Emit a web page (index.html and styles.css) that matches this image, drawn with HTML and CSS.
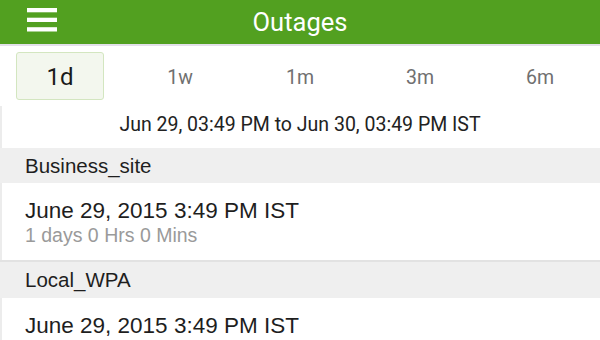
FILE: index.html
```html
<!DOCTYPE html>
<html lang="en">
<head>
    <meta charset="UTF-8">
    <title>Outages</title>
    <link rel="stylesheet" href="styles.css">
</head>
<body>
    <div class="header">
        <button class="menu-btn" aria-label="Menu">
            <svg width="30" height="24" viewBox="0 0 30 24">
                <rect x="0" y="0" width="30" height="4.3" fill="#fff"/>
                <rect x="0" y="9.7" width="30" height="4.3" fill="#fff"/>
                <rect x="0" y="19.2" width="30" height="4.3" fill="#fff"/>
            </svg>
        </button>
        <h1 class="title">Outages</h1>
    </div>

    <div class="ranges">
        <button class="range active">1d</button>
        <button class="range">1w</button>
        <button class="range">1m</button>
        <button class="range">3m</button>
        <button class="range">6m</button>
    </div>

    <div class="content">
        <div class="period">Jun 29, 03:49 PM to Jun 30, 03:49 PM IST</div>

        <div class="site">Business_site</div>
        <div class="outage">
            <div class="outage-time">June 29, 2015 3:49 PM IST</div>
            <div class="outage-length">1 days 0 Hrs 0 Mins</div>
        </div>

        <div class="site site-border">Local_WPA</div>
        <div class="outage">
            <div class="outage-time">June 29, 2015 3:49 PM IST</div>
        </div>
    </div>
</body>
</html>
```

FILE: styles.css
```css
* {
    margin: 0;
    padding: 0;
    box-sizing: border-box;
}

body {
    font-family: Roboto, 'Liberation Sans', sans-serif;
    background: #fff;
    color: #222;
    width: 600px;
    height: 340px;
    overflow: hidden;
}

.header {
    position: relative;
    height: 46px;
    background: #52a020;
    border-bottom: 2px solid #e3e0ea;
    display: flex;
    align-items: center;
    justify-content: center;
}

.menu-btn {
    position: absolute;
    left: 27px;
    top: 8px;
    border: none;
    background: none;
    display: block;
    line-height: 0;
}

.title {
    font-size: 25.5px;
    font-weight: 400;
    color: #fff;
}

.ranges {
    display: grid;
    grid-template-columns: repeat(5, 1fr);
    height: 60px;
    padding: 6px 0;
}

.range {
    font-family: Roboto, sans-serif;
    font-size: 19.5px;
    color: #707070;
    background: none;
    border: 1px solid transparent;
    border-radius: 3px;
    margin: 0 16px;
    padding-top: 2px;
}

.range.active {
    font-size: 24px;
    color: #1a1a1a;
    background: #f3f7ee;
    border-color: #d3e6c0;
}

.content {
    border-left: 2px solid #ececec;
}

.period {
    height: 42px;
    font-size: 19.5px;
    text-align: center;
    line-height: 38px;
    color: #222;
    margin-left: -2px;
}

.site {
    height: 35px;
    background: #efefef;
    font-family: 'Liberation Sans', sans-serif;
    font-size: 20.5px;
    line-height: 36px;
    padding-left: 25px;
    margin-left: -2px;
    color: #1e1e1e;
}

.site-border {
    height: 38px;
    border-top: 2px solid #e2e2e2;
    line-height: 36px;
}

.outage {
    padding: 15px 0 13px 25px;
    font-family: 'Liberation Sans', sans-serif;
    margin-left: -2px;
}

.outage-time {
    font-size: 22.5px;
    line-height: 25px;
    color: #1e1e1e;
}

.outage-length {
    font-size: 19.5px;
    line-height: 24px;
    color: #9a9a9a;
}
```
